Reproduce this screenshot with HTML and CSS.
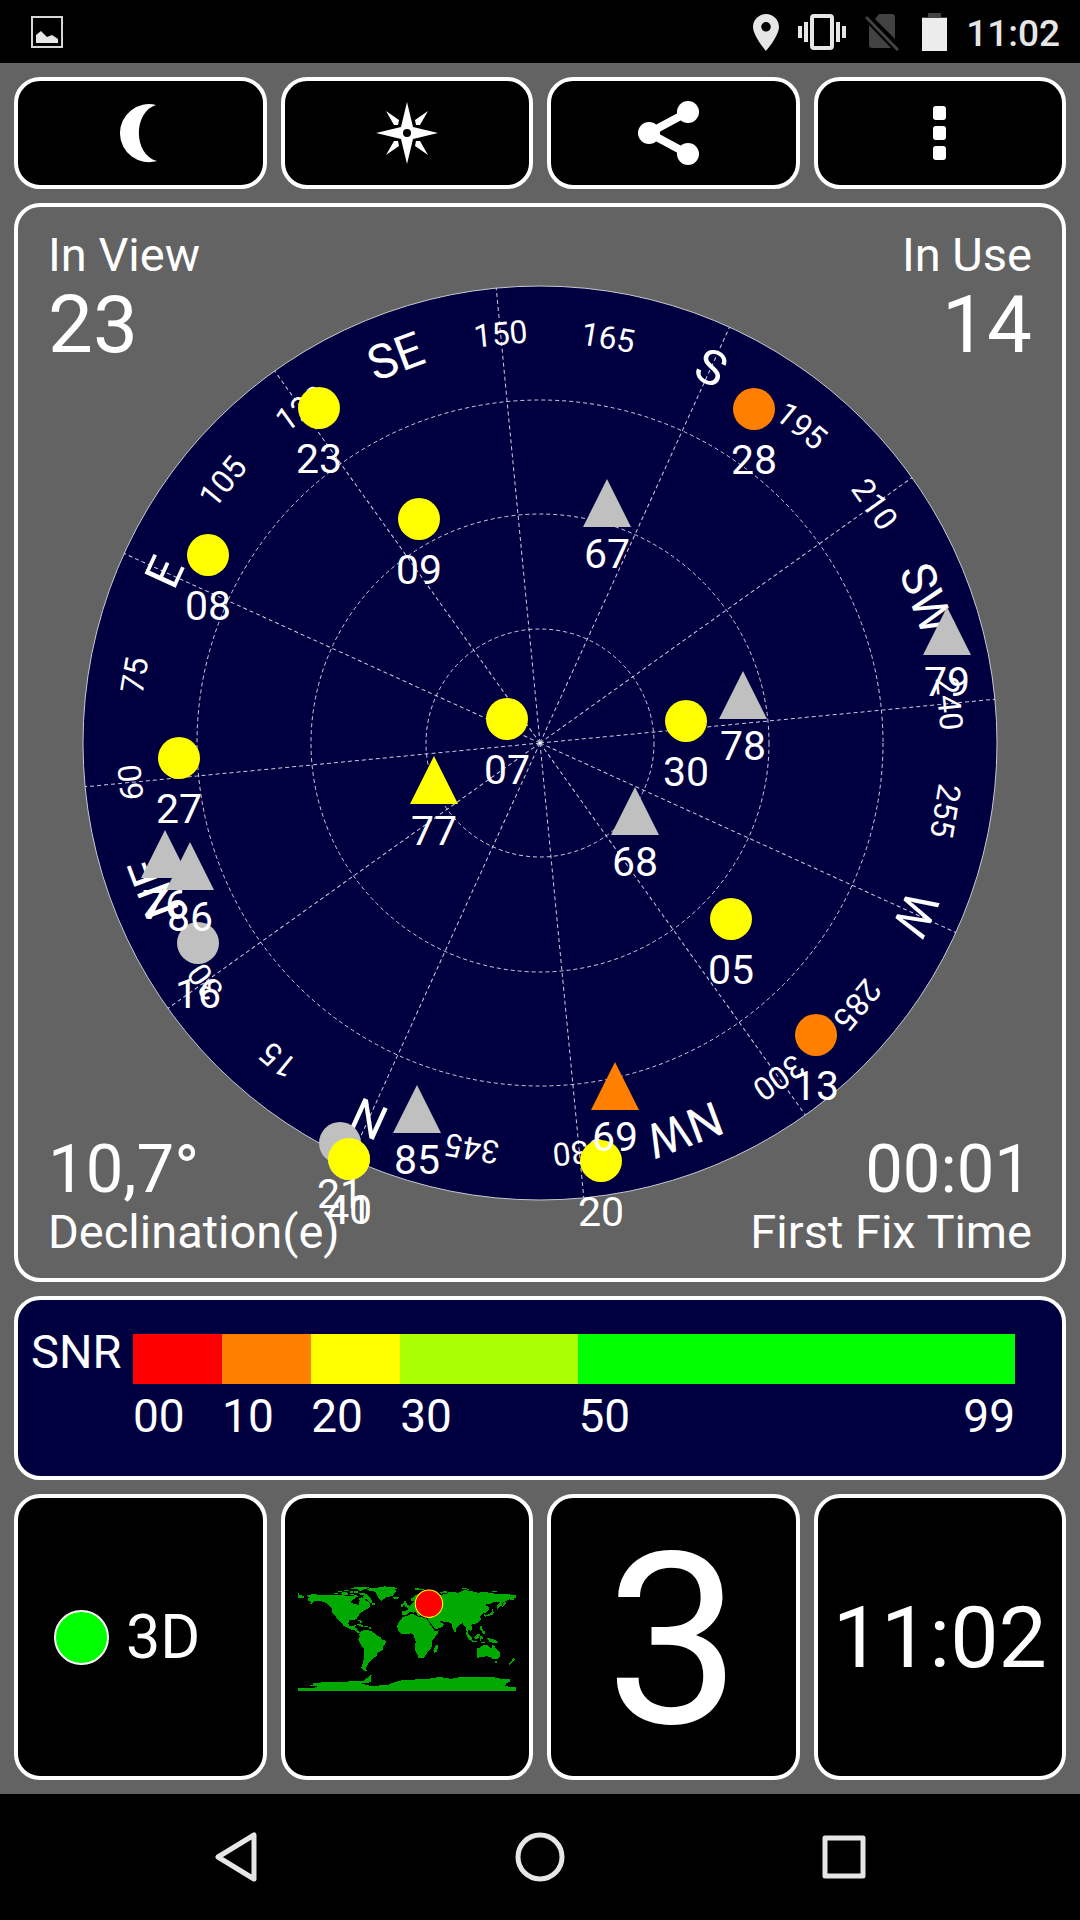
FILE: index.html
```html
<!DOCTYPE html>
<html lang="en">
<head>
    <meta charset="UTF-8">
    <meta name="viewport" content="width=device-width, initial-scale=1.0">
    <title>GPS Status</title>
    <link rel="stylesheet" href="styles.css">
</head>
<body>
    <header class="status-bar">
        <svg class="status-left" width="32" height="32" viewBox="0 0 32 32">
            <rect x="1" y="1" width="30" height="30" fill="none" stroke="#d6d6d6" stroke-width="2"/>
            <path d="M5 27V19L10 15L16 21L21 19L27 23V27Z" fill="#e6e6e6"/>
        </svg>
        <svg width="26" height="38" viewBox="0 0 26 38">
            <path d="M13 1C6 1 0 6.500 0 14C0 23 13 38 13 38S26 23 26 14C26 6.500 20 1 13 1ZM13 9A4.800 4.800 0 1 1 13 18.600A4.800 4.800 0 1 1 13 9Z" fill="#e6e6e6" fill-rule="evenodd"/>
        </svg>
        <svg width="48" height="36" viewBox="0 0 48 36">
            <rect x="14" y="2" width="20" height="32" rx="2" fill="none" stroke="#e6e6e6" stroke-width="4"/>
            <path d="M6 8H10V28H6ZM0 12H4V24H0ZM38 8H42V28H38ZM44 12H48V24H44Z" fill="#e6e6e6"/>
        </svg>
        <svg width="34" height="38" viewBox="0 0 34 38">
            <path d="M14 1H27Q30 1 30 4V26L10 6ZM4 12L26 35H7Q4 35 4 32Z" fill="#424242"/>
            <path d="M1 4L33 37" stroke="#424242" stroke-width="3"/>
        </svg>
        <svg class="battery" width="25" height="38" viewBox="0 0 25 38">
            <path d="M6 0H19V4H25V6H0V4H6Z" fill="#424242"/>
            <rect y="5" width="25" height="33" fill="#ececec"/>
        </svg>
        <span class="status-time">11:02</span>
    </header>

    <main class="app">
        <div class="row toolbar">
            <button class="tile" aria-label="Night mode">
                <svg width="62" height="62" viewBox="0 0 62 62">
                    <path d="M47 3A29 29 0 1 0 48 59C24 53 24 10 47 3Z" fill="#fff"/>
                </svg>
            </button>
            <button class="tile" aria-label="Compass">
                <svg width="62" height="62" viewBox="-31 -31 62 62">
                    <path d="M0 -31L6 -6L31 0L6 6L0 31L-6 6L-31 0L-6 -6ZM0 -4A4 4 0 1 0 0 4A4 4 0 1 0 0 -4Z" fill="#fff" fill-rule="evenodd"/>
                    <path d="M-21 -22L-8 -13L-9 -8L-13 -8ZM21 -22L8 -13L9 -8L13 -8ZM-21 22L-8 13L-9 8L-13 8ZM21 22L8 13L9 8L13 8Z" fill="#fff"/>
                </svg>
            </button>
            <button class="tile" aria-label="Share">
                <svg width="70" height="66" viewBox="0 0 70 66">
                    <path d="M50 12L11 33L50 54" fill="none" stroke="#fff" stroke-width="8"/>
                    <circle cx="50" cy="12" r="11" fill="#fff"/>
                    <circle cx="11" cy="33" r="11" fill="#fff"/>
                    <circle cx="50" cy="54" r="11" fill="#fff"/>
                </svg>
            </button>
            <button class="tile" aria-label="More options">
                <svg width="14" height="54" viewBox="0 0 14 54">
                    <rect width="13" height="14" rx="3" fill="#fff"/>
                    <rect y="20" width="13" height="14" rx="3" fill="#fff"/>
                    <rect y="40" width="13" height="14" rx="3" fill="#fff"/>
                </svg>
            </button>
        </div>

        <section class="sky">
            <svg class="radar" viewBox="-522 -536 1044 1071">
                <circle class="dial" r="457"/>

                <g class="labels" transform="rotate(-155.5)">
                    <text class="point" transform="rotate(0)" y="-396">N</text>
                    <text transform="rotate(15)" y="-400">15</text>
                    <text transform="rotate(30)" y="-400">30</text>
                    <text class="point" transform="rotate(45)" y="-396">NE</text>
                    <text transform="rotate(60)" y="-400">60</text>
                    <text transform="rotate(75)" y="-400">75</text>
                    <text class="point" transform="rotate(90)" y="-396">E</text>
                    <text transform="rotate(105)" y="-400">105</text>
                    <text transform="rotate(120)" y="-400">120</text>
                    <text class="point" transform="rotate(135)" y="-396">SE</text>
                    <text transform="rotate(150)" y="-400">150</text>
                    <text transform="rotate(165)" y="-400">165</text>
                    <text class="point" transform="rotate(180)" y="-396">S</text>
                    <text transform="rotate(195)" y="-400">195</text>
                    <text transform="rotate(210)" y="-400">210</text>
                    <text class="point" transform="rotate(225)" y="-396">SW</text>
                    <text transform="rotate(240)" y="-400">240</text>
                    <text transform="rotate(255)" y="-400">255</text>
                    <text class="point" transform="rotate(270)" y="-396">W</text>
                    <text transform="rotate(285)" y="-400">285</text>
                    <text transform="rotate(300)" y="-400">300</text>
                    <text class="point" transform="rotate(315)" y="-396">NW</text>
                    <text transform="rotate(330)" y="-400">330</text>
                    <text transform="rotate(345)" y="-400">345</text>
                </g>

                <g class="grid">
                    <circle r="114"/>
                    <circle r="229"/>
                    <circle r="343"/>
                    <g id="spokes" transform="rotate(-155.5)"></g>
                </g>

                <g id="satellites"></g>
            </svg>

            <div class="readouts">
                <div class="readout">
                    <div class="caption">In View</div>
                    <div class="value">23</div>
                </div>
                <div class="readout right">
                    <div class="caption">In Use</div>
                    <div class="value">14</div>
                </div>
                <div class="readout bottom">
                    <div class="value small">10,7°</div>
                    <div class="caption">Declination(e)</div>
                </div>
                <div class="readout bottom right">
                    <div class="value small">00:01</div>
                    <div class="caption">First Fix Time</div>
                </div>
            </div>
        </section>

        <section class="snr">
            <span class="snr-title">SNR</span>
            <div class="snr-scale">
                <div class="band red"><span>00</span></div>
                <div class="band orange"><span>10</span></div>
                <div class="band yellow"><span>20</span></div>
                <div class="band lime"><span>30</span></div>
                <div class="band green"><span>50</span><span>99</span></div>
            </div>
        </section>

        <div class="row cards">
            <div class="tile fix">
                <span class="fix-dot"></span>
                <span>3D</span>
            </div>
            <div class="tile map">
                <svg class="world" viewBox="51 48 654 315">
                    <g fill="#00aa00" shape-rendering="crispEdges">
                        <!-- North and Central America -->
                        <path d="M80 75L98 72L110 74L150 76L178 75L200 78L214 79L222 75L231 78L224 84L214 89L208 95L214 100L226 102L230 107L235 104L233 98L236 92L234 85L240 82L250 85L256 92L262 95L268 104L264 112L256 118L248 121L240 128L233 135L229 142L224 148L214 149L204 151L202 160L206 168L215 169L219 164L224 164L221 172L228 176L230 183L237 186L241 183L244 186L238 190L228 188L220 181L210 178L198 173L188 168L180 158L170 148L163 138L154 128L152 116L146 108L138 100L126 95L110 93L98 94L90 102L82 103L92 96L82 92L80 86L86 82L78 78Z"/>
                        <!-- Canadian islands -->
                        <path d="M158 68H170V72H158ZM172 62H184V66H172ZM180 68L196 66L204 72L192 76L182 74ZM190 59H204V63H190ZM208 55L222 52L250 51L266 53L252 58L240 60L226 58ZM206 62H216V68H206ZM218 64H230V68H218ZM206 71H218V75H206ZM234 68L248 69L258 74L268 84L274 93L272 100L262 94L254 86L244 82L248 76L236 74ZM234 60H244V64H234ZM272 100H280V106H272ZM230 150H240V153H230ZM236 154H244V158H236ZM227 162L240 163L248 169L240 170L230 165ZM250 168H262V171H250ZM264 172H268V178H264Z"/>
                        <!-- Greenland and Iceland -->
                        <path d="M258 57L272 54L296 52L312 49L330 52L350 53L342 58L344 64L338 70L340 75L328 79L314 82L306 89L300 92L292 84L288 76L284 66L272 62L258 61ZM335 81L346 80L354 83L346 87L338 86Z"/>
                        <!-- South America -->
                        <path d="M242 183L250 179L262 181L272 184L280 190L286 196L298 201L302 208L315 212L313 220L307 228L304 240L290 247L286 258L276 264L270 272L262 280L258 288L254 296L256 300L246 300L241 292L246 276L249 260L250 236L242 228L236 218L232 208L236 200L234 194L240 188ZM250 298H258V302H250Z"/>
                        <!-- Europe and Asia -->
                        <path d="M364 122L378 121L380 115L376 110L386 106L394 100L400 92L388 94L388 86L398 80L408 72L420 68L440 66L480 75L496 71L500 67L516 66L530 69L548 60L564 62L590 68L610 66L640 71L680 72L694 75L705 74V82L698 86L696 91L684 88L676 92L664 96L660 107L648 117L646 108L658 95L640 95L632 100L616 102L612 106L624 112L620 122L612 130L606 130L600 134L596 140L600 148L592 156L584 160L574 162L570 166L574 174L568 182L560 178L558 186L562 196L568 202L560 196L556 186L554 174L548 166L544 160L534 164L526 172L524 180L526 186L520 188L514 176L512 166L508 158L498 156L488 155L476 153L470 150L480 158L488 162L484 170L474 174L462 177L454 168L446 156L440 150L442 144L436 140L424 138L418 136L412 138L404 128L398 124L400 130L392 126L384 126L378 134L366 136L362 134Z"/>
                        <!-- British Isles, Mediterranean, arctic islands -->
                        <path d="M368 94H374V98H378V106H382V112H370V104H366ZM360 102H366V110H360ZM386 133H396V136H386ZM402 55H412V59H402ZM414 57H428V61H414ZM474 68L486 64L498 63V67L480 71ZM542 55H556V58H542ZM556 57H564V61H556ZM632 62H646V65H632ZM51 69H54V75H60L68 79V83H51Z"/>
                        <!-- Africa and Madagascar -->
                        <path d="M364 142L380 136L398 133L406 137L410 140L430 143L440 150L446 162L454 174L460 182L472 181L470 190L460 202L452 212L452 224L450 234L442 242L434 254L428 262L412 264L408 254L402 240L400 226L404 216L400 204L396 194L388 190L372 192L358 190L350 180L348 168L354 154ZM464 226L470 224V234L466 244L458 248L456 240Z"/>
                        <!-- Japan -->
                        <path d="M668 94L676 96L670 104L662 112L664 104ZM632 116H636V126H632ZM630 126L638 126L634 134L624 137L612 140V135L626 132ZM608 132H612V138H608Z"/>
                        <!-- South-east Asia -->
                        <path d="M552 184L562 192L572 204L574 212L564 210L556 198ZM572 211L588 213V217L572 215ZM578 202L590 190L596 192L592 204L584 208ZM597 198H602V202H606V206H600V212H596ZM596 168H601V178H604V184H598ZM602 184H610V192H604ZM600 216H612V219H600ZM616 203L630 206L642 210L652 220L640 218L624 216L620 208Z"/>
                        <!-- Australia and New Zealand -->
                        <path d="M586 236L596 232L604 226L612 224L620 224L622 230L630 234L634 222L640 230L648 238L656 246L656 258L648 268L636 268L628 262L616 258L604 260L588 263L586 254L588 246ZM642 272H648V278H642ZM694 264L700 266L698 272L692 276L686 284L682 282L690 274Z"/>
                        <!-- Antarctica -->
                        <path d="M51 354H100L108 348L86 346L96 344L94 338L118 338L122 334L200 334L206 331L236 333L252 330L250 326L262 322L266 314L272 316L268 324L270 334L260 338L240 340L256 344L272 348L300 345L320 344L346 334L362 330L400 328L440 326L470 321L500 323L506 327L530 322L560 320L620 320L642 322L660 326L686 328L684 336L676 338L672 346L682 350L705 351V363H51Z"/>
                    </g>
                    <!-- Red Sea -->
                    <path d="M440 150L458 174" fill="none" stroke="#000" stroke-width="2"/>
                    <circle cx="443" cy="101" r="41" fill="#f00" stroke="#ff0" stroke-width="3"/>
                </svg>
            </div>
            <div class="tile count">3</div>
            <div class="tile clock">11:02</div>
        </div>
    </main>

    <nav class="nav-bar">
        <button aria-label="Back">
            <svg width="60" height="60" viewBox="0 0 60 60">
                <path d="M48 8V52L12 30Z"/>
            </svg>
        </button>
        <button aria-label="Home">
            <svg width="60" height="60" viewBox="0 0 60 60">
                <circle cx="30" cy="30" r="22"/>
            </svg>
        </button>
        <button aria-label="Recent apps">
            <svg width="60" height="60" viewBox="0 0 60 60">
                <rect x="11" y="11" width="38" height="38"/>
            </svg>
        </button>
    </nav>

    <script>
        const SVG = 'http://www.w3.org/2000/svg';

        // x and y are measured from the centre of the dial
        const satellites = [
            { id: '23', x: -221, y: -335, color: 'yellow' },
            { id: '08', x: -332, y: -188, color: 'yellow' },
            { id: '09', x: -121, y: -224, color: 'yellow' },
            { id: '07', x: -33, y: -24, color: 'yellow' },
            { id: '27', x: -361, y: 15, color: 'yellow' },
            { id: '28', x: 214, y: -334, color: 'orange' },
            { id: '30', x: 146, y: -22, color: 'yellow' },
            { id: '05', x: 191, y: 176, color: 'yellow' },
            { id: '13', x: 276, y: 292, color: 'orange' },
            { id: '20', x: 61, y: 418, color: 'yellow' },
            { id: '16', x: -342, y: 200, color: 'grey' },
            { id: '21', x: -200, y: 400, color: 'grey' },
            { id: '41', x: -191, y: 416, color: 'grey' },
            { id: '40', x: -191, y: 416, color: 'yellow' },
            { id: '67', x: 67, y: -240, color: 'grey', glonass: true },
            { id: '79', x: 407, y: -112, color: 'grey', glonass: true },
            { id: '78', x: 203, y: -48, color: 'grey', glonass: true },
            { id: '68', x: 95, y: 68, color: 'grey', glonass: true },
            { id: '77', x: -106, y: 37, color: 'yellow', glonass: true },
            { id: '76', x: -375, y: 111, color: 'grey', glonass: true },
            { id: '86', x: -350, y: 123, color: 'grey', glonass: true },
            { id: '85', x: -123, y: 366, color: 'grey', glonass: true },
            { id: '69', x: 75, y: 343, color: 'orange', glonass: true }
        ];

        function add(parent, name, attrs) {
            const el = document.createElementNS(SVG, name);
            for (const key in attrs) {
                el.setAttribute(key, attrs[key]);
            }
            parent.appendChild(el);
            return el;
        }

        function drawSpokes() {
            const spokes = document.getElementById('spokes');
            for (let a = 0; a < 360; a += 30) {
                add(spokes, 'line', { x1: 0, y1: 0, x2: 0, y2: -457, transform: `rotate(${a})` });
            }
        }

        function drawSatellites() {
            const layer = document.getElementById('satellites');
            satellites.forEach(sat => {
                if (sat.glonass) {
                    const points = `${sat.x},${sat.y - 24} ${sat.x - 24},${sat.y + 24} ${sat.x + 24},${sat.y + 24}`;
                    add(layer, 'polygon', { points: points, class: sat.color });
                } else {
                    add(layer, 'circle', { cx: sat.x, cy: sat.y, r: 21, class: sat.color });
                }
            });
            satellites.forEach(sat => {
                add(layer, 'text', { x: sat.x, y: sat.y + 65 }).textContent = sat.id;
            });
        }

        drawSpokes();
        drawSatellites();
    </script>
</body>
</html>
```
FILE: styles.css
```css
* {
    box-sizing: border-box;
}
body {
    margin: 0;
    min-height: 100vh;
    display: flex;
    flex-direction: column;
    background: #000;
    color: #fff;
    font-family: Roboto, sans-serif;
}
svg {
    display: block;
    flex-shrink: 0;
}
button {
    margin: 0;
    padding: 0;
    border: none;
    background: none;
    color: inherit;
    font: inherit;
}

/* Status bar */
.status-bar {
    display: flex;
    align-items: center;
    gap: 19px;
    height: 63px;
    padding: 0 20px 0 31px;
}
.status-left {
    margin-right: auto;
}
.battery {
    margin-left: 4px;
}
.status-time {
    padding-top: 4px;
    color: #e6e6e6;
    font-size: 37px;
    font-weight: 500;
    line-height: 60px;
}

/* App */
.app {
    flex: 1;
    display: flex;
    flex-direction: column;
    gap: 14px;
    padding: 14px;
    background: #636363;
}
.row {
    display: grid;
    grid-template-columns: repeat(4, 1fr);
    gap: 14px;
}
.tile,
.sky,
.snr {
    border: 4px solid #fff;
    border-radius: 26px;
}
.tile {
    display: flex;
    align-items: center;
    justify-content: center;
    min-width: 0;
    background: #000;
}
.toolbar .tile {
    height: 112px;
}

/* Sky view */
.sky {
    display: grid;
}
.radar,
.readouts {
    grid-area: 1 / 1;
}
.radar {
    width: 100%;
    font-size: 41px;
    text-anchor: middle;
    fill: #fff;
}
.dial {
    fill: #000040;
    stroke: #c8c8d0;
    stroke-width: 1;
}
.grid {
    fill: none;
    stroke: #fff;
    stroke-opacity: 0.8;
    stroke-dasharray: 4 3;
}
.labels {
    font-size: 32px;
}
.labels .point {
    font-size: 48px;
}
.radar .yellow {
    fill: #ffff00;
}
.radar .orange {
    fill: #ff8000;
}
.radar .grey {
    fill: #c0c0c0;
}
.readouts {
    display: grid;
    grid-template-columns: 1fr 1fr;
    align-content: space-between;
    padding: 20px 30px 18px;
}
.right {
    text-align: right;
}
.caption {
    font-size: 47px;
    line-height: 56px;
}
.value {
    font-size: 80px;
    line-height: 84px;
}
.value.small {
    font-size: 67px;
    line-height: 70px;
}

/* Signal scale */
.snr {
    display: flex;
    height: 184px;
    padding: 34px 47px 0 13px;
    background: #000040;
    font-size: 46px;
}
.snr-title {
    width: 102px;
    font-size: 47px;
    line-height: 36px;
}
.snr-scale {
    flex: 1;
    display: grid;
    grid-template-columns: 10fr 10fr 10fr 20fr 49fr;
}
.band {
    display: flex;
    flex-wrap: wrap;
    justify-content: space-between;
    align-content: flex-start;
    line-height: 64px;
}
.band::before {
    content: "";
    flex: 0 0 100%;
    height: 50px;
    background: #00ff00;
}
.band.red::before {
    background: #ff0000;
}
.band.orange::before {
    background: #ff8000;
}
.band.yellow::before {
    background: #ffff00;
}
.band.lime::before {
    background: #aaff00;
}

/* Bottom cards */
.cards {
    flex: 1;
    min-height: 286px;
}
.fix {
    justify-content: flex-start;
    gap: 17px;
    padding-left: 36px;
    font-size: 61px;
}
.fix-dot {
    width: 55px;
    height: 55px;
    border: 2px solid #fff;
    border-radius: 50%;
    background: #00ff00;
}
.map {
    padding: 4px 13px 0;
}
.world {
    width: 100%;
}
.count {
    padding-top: 8px;
    font-size: 240px;
    line-height: 240px;
}
.clock {
    font-size: 86px;
}

/* Navigation bar */
.nav-bar {
    display: flex;
    justify-content: center;
    height: 126px;
}
.nav-bar button {
    display: flex;
    flex: 0 1 304px;
    align-items: center;
    justify-content: center;
}
.nav-bar svg {
    fill: none;
    stroke: #e6e6e6;
    stroke-width: 5;
    stroke-linejoin: round;
}
```
